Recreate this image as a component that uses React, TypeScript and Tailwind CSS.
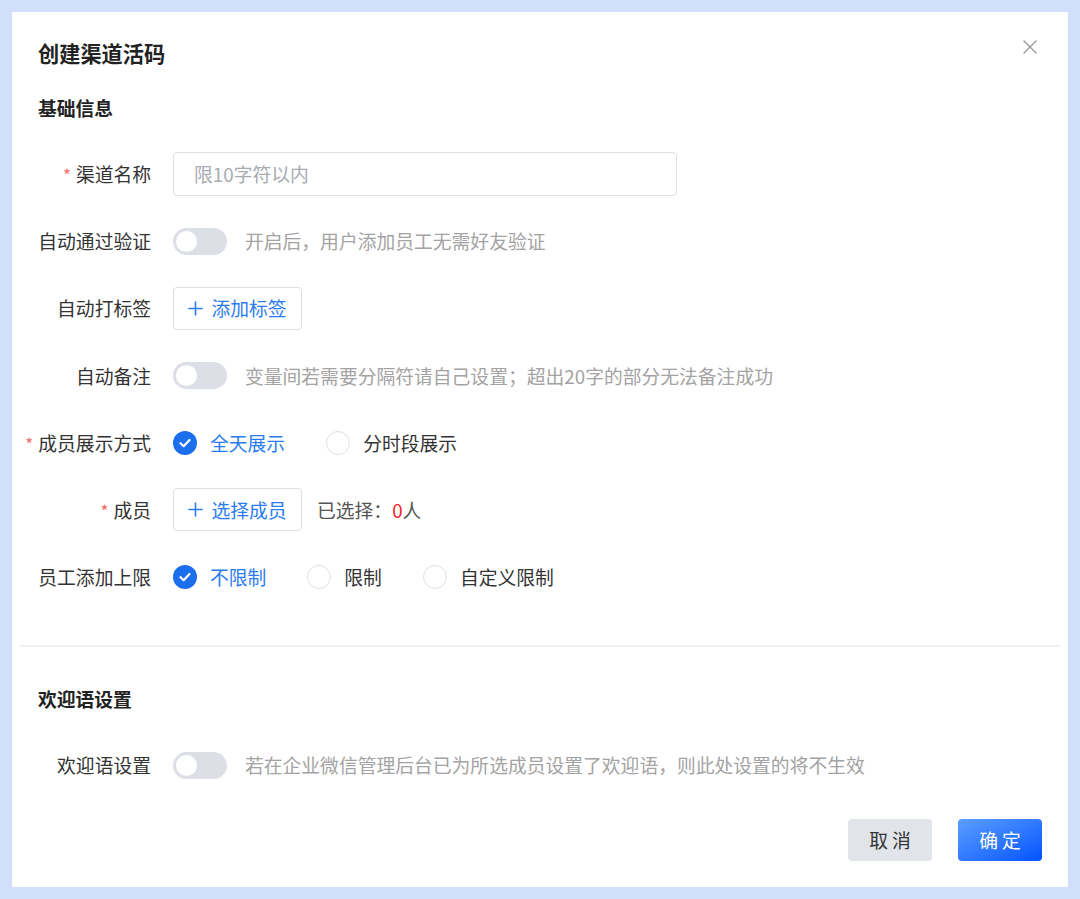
import React from "react";

const Radio = ({ checked, label }: { checked?: boolean; label: string }) => (
  <div className="flex items-center gap-[13px]">
    {checked ? (
      <div className="w-[24px] h-[24px] rounded-full bg-[#1b6fec] flex items-center justify-center">
        <svg width="14" height="14" viewBox="0 0 14 14" fill="none">
          <path d="M2.5 7.2 L5.7 10.2 L11.5 4" stroke="white" strokeWidth="2.2" strokeLinecap="round" strokeLinejoin="round" />
        </svg>
      </div>
    ) : (
      <div className="w-[24px] h-[24px] rounded-full border border-[#dcdfe6] bg-white" />
    )}
    <span className={checked ? "text-[#2b7cf0]" : "text-[#333333]"}>{label}</span>
  </div>
);

const Switch = () => (
  <div className="w-[54px] h-[27px] rounded-full bg-[#dcdfe6] flex items-center px-[3px] shrink-0">
    <div className="w-[21px] h-[21px] rounded-full bg-white" />
  </div>
);

const Plus = () => (
  <svg width="15" height="15" viewBox="0 0 15 15" fill="none">
    <path d="M7.5 1 V14 M1 7.5 H14" stroke="#2b7cf0" strokeWidth="1.6" strokeLinecap="round" />
  </svg>
);

const OutlineBtn = ({ label }: { label: string }) => (
  <div className="h-[43px] w-[129px] border border-[#dcdfe6] rounded-[4px] flex items-center justify-center gap-[8px] text-[#2b7cf0] bg-white">
    <Plus />
    <span>{label}</span>
  </div>
);

const Row = ({ label, required, children }: { label: string; required?: boolean; children: React.ReactNode }) => (
  <div className="h-[44px] flex items-center">
    <div className="w-[139px] shrink-0 text-right text-[#333333] flex items-center justify-end">
      {required && <span className="text-[#f56c6c] mr-[5px] text-[17px] relative top-[1px]">*</span>}
      <span>{label}</span>
    </div>
    <div className="ml-[22px] flex items-center">{children}</div>
  </div>
);

export default function App() {
  return (
    <div className="w-[1080px] h-[899px] bg-[#d1dffc] p-[12px] font-['Noto_Sans_CJK_SC','Noto_Sans',sans-serif] text-[18.8px]">
      <div className="w-[1056px] h-[875px] bg-white flex flex-col">
        <div className="flex justify-between items-start pl-[26px] pr-[30px] pt-[26px]">
          <div className="text-[21.2px] leading-[30px] font-bold text-[#222222]">创建渠道活码</div>
          <svg width="16" height="16" viewBox="0 0 16 16" fill="none" className="mt-[1px]">
            <path d="M2 2 L14 14 M14 2 L2 14" stroke="#9a9a9a" strokeWidth="1.4" strokeLinecap="round" />
          </svg>
        </div>

        <div className="pl-[26px] mt-[26px] leading-[28px] font-bold text-[#222222]">基础信息</div>

        <div className="mt-[30px] flex flex-col gap-[23.2px] leading-[28px]">
          <Row label="渠道名称" required>
            <div className="w-[504px] h-[44px] border border-[#dcdfe6] rounded-[4px] pl-[20px] flex items-center text-[#a8abb2]">
              限10字符以内
            </div>
          </Row>
          <Row label="自动通过验证">
            <Switch />
            <span className="ml-[18px] text-[#a3a3a3]">开启后，用户添加员工无需好友验证</span>
          </Row>
          <Row label="自动打标签">
            <OutlineBtn label="添加标签" />
          </Row>
          <Row label="自动备注">
            <Switch />
            <span className="ml-[18px] text-[#a3a3a3]">变量间若需要分隔符请自己设置；超出20字的部分无法备注成功</span>
          </Row>
          <Row label="成员展示方式" required>
            <div className="flex items-center gap-[41px]">
              <Radio checked label="全天展示" />
              <Radio label="分时段展示" />
            </div>
          </Row>
          <Row label="成员" required>
            <OutlineBtn label="选择成员" />
            <span className="ml-[15px] text-[#555555]">
              已选择：<span className="text-[#f5222d]">0</span>人
            </span>
          </Row>
          <Row label="员工添加上限">
            <div className="flex items-center gap-[41px]">
              <Radio checked label="不限制" />
              <Radio label="限制" />
              <Radio label="自定义限制" />
            </div>
          </Row>
        </div>

        <div className="mx-[8px] mt-[46px] h-[2px] bg-[#eef0f4]" />

        <div className="pl-[26px] mt-[38px] leading-[28px] font-bold text-[#222222]">欢迎语设置</div>

        <div className="mt-[30px] leading-[28px]">
          <Row label="欢迎语设置">
            <Switch />
            <span className="ml-[18px] text-[#a3a3a3]">若在企业微信管理后台已为所选成员设置了欢迎语，则此处设置的将不生效</span>
          </Row>
        </div>

        <div className="mt-[32px] flex justify-end gap-[26px] pr-[26px]">
          <div className="w-[84px] h-[42px] rounded-[4px] bg-[#e1e4e9] flex items-center justify-center text-[#333333] tracking-[4px] pl-[4px]">
            取消
          </div>
          <div className="w-[84px] h-[42px] rounded-[4px] bg-linear-to-br from-[#5b9dff] to-[#0050ff] flex items-center justify-center text-white tracking-[4px] pl-[4px]">
            确定
          </div>
        </div>
      </div>
    </div>
  );
}
